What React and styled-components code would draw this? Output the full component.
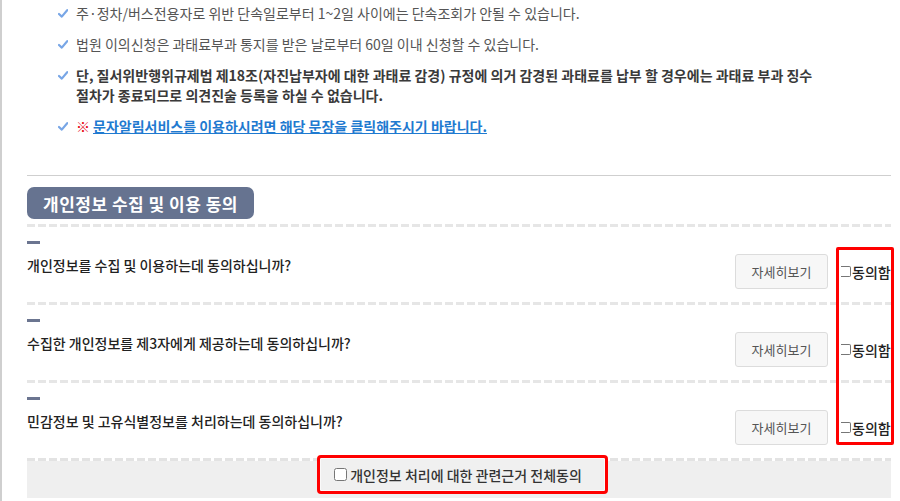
import React from "react";
import styled, { createGlobalStyle } from "styled-components";

const GlobalStyle = createGlobalStyle`
  html, body { margin: 0; padding: 0; background: #fff; }
  body {
    font-family: "Noto Sans CJK KR", "Noto Sans", "Liberation Sans", sans-serif;
    font-size: 14px;
    color: #333;
  }
  * { box-sizing: border-box; }
`;

const Page = styled.div`
  min-height: 501px;
  border-left: 2px solid #cfcfcf;
  padding: 3px 9px 0 25px;
`;

const NoticeList = styled.ul`
  list-style: none;
  margin: 0;
  padding: 0 0 0 31px;
  display: flex;
  flex-direction: column;
  gap: 11px;
`;

const NoticeItem = styled.li`
  display: flex;
  align-items: flex-start;
  line-height: 20px;
  font-size: 14px;
  color: ${(p) => (p.$strong ? "#3a3a3a" : "#555")};
  font-weight: ${(p) => (p.$strong ? 700 : 400)};
`;

const CheckIcon = styled.svg`
  flex: none;
  width: 10px;
  height: 9px;
  margin: 6px 8px 0 0;
`;

const Mark = styled.span`
  color: #e60012;
  font-weight: 700;
  margin-right: 3px;
`;

const Link = styled.a`
  color: #1f7ad0;
  font-weight: 700;
  text-decoration: underline;
  cursor: pointer;
`;

const Rule = styled.hr`
  margin: 39px 0 0;
  border: 0;
  height: 1px;
  background: #cfcfcf;
`;

const Badge = styled.h2`
  display: inline-flex;
  align-items: center;
  height: 32px;
  margin: 11px 0 0;
  padding: 0 16px;
  border-radius: 7px;
  background: #667390;
  color: #fff;
  font-size: 17px;
  font-weight: 700;
  letter-spacing: 0.5px;
`;

const Dashed = styled.div`
  height: 3px;
  margin-top: ${(p) => p.$top || 0}px;
  background: repeating-linear-gradient(90deg, #e6e6e6 0 8px, transparent 8px 11px);
`;

const RowList = styled.div`
  position: relative;
`;

const Row = styled.div`
  padding: 14px 0 13px;
`;

const Marker = styled.div`
  width: 13px;
  height: 3px;
  background: #6b7590;
  margin-bottom: 10px;
`;

const Line = styled.div`
  display: flex;
  justify-content: space-between;
  align-items: flex-start;
`;

const Question = styled.p`
  margin: 1px 0 0;
  line-height: 20px;
  font-size: 14px;
  font-weight: 500;
  color: #222;
`;

const Actions = styled.div`
  display: flex;
  align-items: center;
  height: 35px;
`;

const DetailButton = styled.button`
  width: 93px;
  height: 35px;
  margin-right: 13px;
  border: 1px solid #dcdcdc;
  border-radius: 3px;
  background: #f7f7f7;
  color: #555;
  font-family: inherit;
  font-size: 13px;
  cursor: pointer;
`;

const AgreeLabel = styled.label`
  width: 50px;
  display: flex;
  align-items: center;
  gap: 1px;
  font-size: 14px;
  font-weight: 500;
  color: #222;
  line-height: 16px;
  white-space: nowrap;
`;

const ClippedBox = styled.input`
  appearance: none;
  flex: none;
  width: 10px;
  height: 11px;
  margin: 0;
  border: 1px solid #767676;
  border-left: 0;
  border-radius: 0 2px 2px 0;
  background: #fff;
`;

const Highlight = styled.div`
  position: absolute;
  top: 20px;
  right: -3px;
  width: 58px;
  height: 198px;
  border: 3px solid #ff0000;
  border-radius: 2px;
  pointer-events: none;
`;

const AllAgreeBox = styled.div`
  height: 40px;
  display: flex;
  justify-content: center;
  align-items: flex-start;
  background:
    repeating-linear-gradient(90deg, #e3e3e3 0 8px, #ffffff 8px 11px) top left / 100% 3px no-repeat,
    #efefef;
  padding-left: 7px;
`;

const AllAgreeLabel = styled.label`
  display: inline-flex;
  align-items: center;
  height: 33px;
  padding: 0 22px 0 13px;
  background: #f0f0f0;
  border: 1px solid #fafafa;
  outline: 3px solid #ff0000;
  border-radius: 1px;
  font-size: 14px;
  font-weight: 500;
  color: #333;
  input {
    margin: 0 3px 0 0;
    width: 13px;
    height: 13px;
  }
`;

const Check = () => (
  <CheckIcon viewBox="0 0 10 9" aria-hidden="true">
    <path d="M1 5 L3.8 7.6 L9.2 1.2" fill="none" stroke="#78a6e6" strokeWidth="2.2" strokeLinecap="round" strokeLinejoin="round" />
  </CheckIcon>
);

const questions = [
  "개인정보를 수집 및 이용하는데 동의하십니까?",
  "수집한 개인정보를 제3자에게 제공하는데 동의하십니까?",
  "민감정보 및 고유식별정보를 처리하는데 동의하십니까?",
];

export default function App() {
  return (
    <>
      <GlobalStyle />
      <Page>
        <NoticeList>
          <NoticeItem>
            <Check />
            <span>주·정차/버스전용자로 위반 단속일로부터 1~2일 사이에는 단속조회가 안될 수 있습니다.</span>
          </NoticeItem>
          <NoticeItem>
            <Check />
            <span>법원 이의신청은 과태료부과 통지를 받은 날로부터 60일 이내 신청할 수 있습니다.</span>
          </NoticeItem>
          <NoticeItem $strong>
            <Check />
            <span>
              단, 질서위반행위규제법 제18조(자진납부자에 대한 과태료 감경) 규정에 의거 감경된 과태료를 납부 할 경우에는 과태료 부과 징수
              <br />
              절차가 종료되므로 의견진술 등록을 하실 수 없습니다.
            </span>
          </NoticeItem>
          <NoticeItem>
            <Check />
            <span>
              <Mark>※</Mark>
              <Link>문자알림서비스를 이용하시려면 해당 문장을 클릭해주시기 바랍니다.</Link>
            </span>
          </NoticeItem>
        </NoticeList>

        <Rule />
        <Badge>개인정보 수집 및 이용 동의</Badge>
        <Dashed $top={5} />

        <RowList>
          {questions.map((q, i) => (
            <React.Fragment key={q}>
              {i > 0 && <Dashed />}
              <Row>
                <Marker />
                <Line>
                  <Question>{q}</Question>
                  <Actions>
                    <DetailButton type="button">자세히보기</DetailButton>
                    <AgreeLabel>
                      <ClippedBox type="checkbox" />
                      동의함
                    </AgreeLabel>
                  </Actions>
                </Line>
              </Row>
            </React.Fragment>
          ))}
          <Highlight />
        </RowList>

        <AllAgreeBox>
          <AllAgreeLabel>
            <input type="checkbox" />
            개인정보 처리에 대한 관련근거 전체동의
          </AllAgreeLabel>
        </AllAgreeBox>
      </Page>
    </>
  );
}
